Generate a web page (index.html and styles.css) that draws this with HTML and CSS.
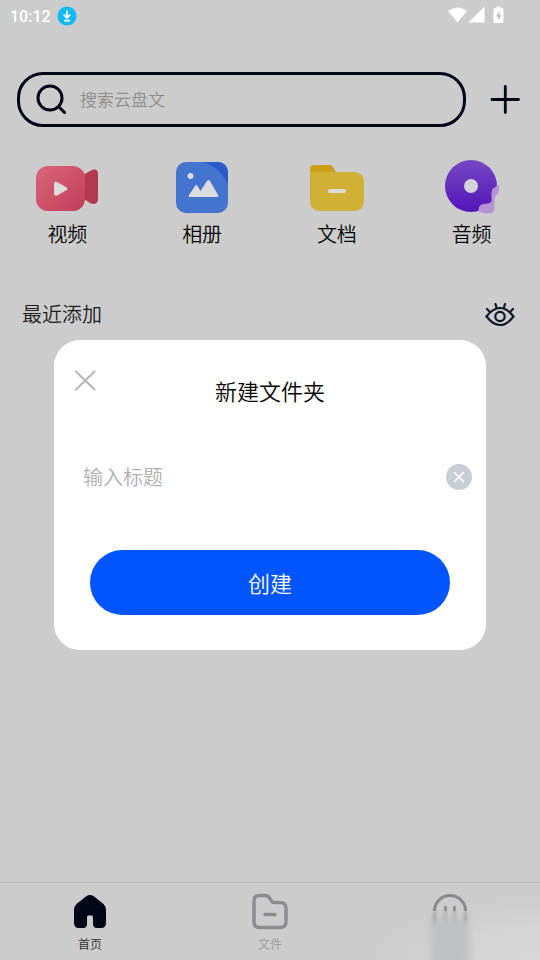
FILE: index.html
```html
<!DOCTYPE html>
<html lang="zh-CN">
<head>
<meta charset="utf-8">
<meta name="viewport" content="width=device-width, initial-scale=1">
<title>云盘</title>
<link rel="stylesheet" href="styles.css">
</head>
<body>
<div class="screen">
  <div class="status">
    <span class="time">10:12</span>
    <svg width="20" height="20" viewBox="0 0 20 20"><circle cx="10" cy="10" r="9.6" fill="#12b9f5"/><path d="M10 4.5v7M6.8 8.7 10 12l3.200-3.300M7 14.600h6" fill="none" stroke="#fff" stroke-width="1.700"/></svg>
    <svg class="signals" width="58" height="20" viewBox="0 0 58 20" fill="#fff"><path d="M0 5Q9.500-2 19 5L9.500 16.500Z"/><path d="M36.500 .5V16.500H20.500Z"/><path d="M48.500 2V.5h4V2H54q1.500 0 1.500 1.500v12q0 1.500-1.500 1.500h-7q-1.500 0-1.500-1.500v-12Q45.500 2 47 2Z"/><path d="M51.500 5 48 10.500h2.200v4l3-5.500H51Z" fill="#bbb"/></svg>
  </div>

  <header class="top">
    <label class="search">
      <svg width="32" height="32" viewBox="0 0 32 32" fill="none" stroke="#020617" stroke-width="3" stroke-linecap="round"><circle cx="14" cy="14" r="12"/><path d="m23 23 5.500 5.500"/></svg>
      <input type="search" placeholder="搜索云盘文" aria-label="搜索">
    </label>
    <button class="icon-button" type="button" aria-label="添加">
      <svg width="30" height="30" viewBox="0 0 30 30" stroke="#020617" stroke-width="2.800" stroke-linecap="round"><path d="M15.300 1.500v26M2 14.500h26.500"/></svg>
    </button>
  </header>

  <nav class="categories" aria-label="分类">
    <a href="#video">
      <svg width="64" height="56" viewBox="0 0 64 56"><defs><linearGradient id="pink" x1="0" y1="0" x2="1" y2="1"><stop offset="0" stop-color="#d9667a"/><stop offset="1" stop-color="#c23d59"/></linearGradient></defs><path d="M48 15 56 10.500q7-3 7 4v24q0 7-7 5l-8-5Z" fill="#b1384e"/><rect x="1" y="6" width="49" height="45" rx="12" fill="url(#pink)"/><path d="M19 24q0-3 3-2l9 5q3 2 0 3.500l-9 5q-3 1-3-2Z" fill="#dddada"/></svg>
      <span>视频</span>
    </a>
    <a href="#album">
      <svg width="64" height="56" viewBox="0 0 64 56"><defs><clipPath id="tile"><rect x="6" y="2" width="52" height="51" rx="10"/></clipPath></defs><g clip-path="url(#tile)"><path d="M6 2h52v52H6Z" fill="#4474ce"/><path d="M33 2Q50 7 58 25V2Z" fill="#295cc9"/></g><circle cx="20.500" cy="16" r="3" fill="#dadbde"/><path d="M20 37q-2 0-1-2l6-9q1-2 2.500 0l3 5L37 21q1.500-2 3 0l8 14q1 2-1 2Z" fill="#dadbde"/></svg>
      <span>相册</span>
    </a>
    <a href="#docs">
      <svg width="64" height="56" viewBox="0 0 64 56"><path d="M5 25V9q0-4 4-4h15q3 0 4 2l4 7v11Z" fill="#cd9f18"/><path d="M5 12h43q11 0 11 11v17q0 11-11 11H16Q5 51 5 40Z" fill="#d0b035"/><rect x="23" y="29" width="18" height="4" rx="1.500" fill="#dddbd2"/></svg>
      <span>文档</span>
    </a>
    <a href="#audio">
      <svg width="64" height="56" viewBox="0 0 64 56"><defs><linearGradient id="violet" x1="0" y1="0" x2="0" y2="1"><stop offset="0" stop-color="#7647c4"/><stop offset="1" stop-color="#5315b9"/></linearGradient></defs><circle cx="31" cy="26" r="26" fill="url(#violet)"/><circle cx="31" cy="26" r="7" fill="#d6d2dc"/><path d="M53 28q3 0 4-3 2.500 0 2 5 0 4-4.500 7v12q0 4.500-7 4.500-9 0-9-4 0-6 9-6 3 0 4-2V32Z" fill="#b793d1"/></svg>
      <span>音频</span>
    </a>
  </nav>

  <main class="recent">
    <h2>最近添加</h2>
    <button class="icon-button" type="button" aria-label="显示或隐藏">
      <svg width="32" height="30" viewBox="0 0 32 30" fill="none" stroke="#11182a" stroke-width="2.200" stroke-linecap="round"><path d="M2.500 16.500Q9 8 16 8t13.500 8.500Q23 25 16 25T2.500 16.500Z"/><circle cx="16" cy="16.500" r="4.700"/><path d="M5.500 11.500 3 9M12.500 7.500 11.500 4M20 7.500 21 4M26.500 11.500 29 9"/></svg>
    </button>
  </main>

  <nav class="tabs" aria-label="主导航">
    <a class="active" href="#home">
      <svg width="38" height="38" viewBox="0 0 38 38"><path d="M15.500 3q3.500-2 7 0l10 8q2.500 2.500 2.500 6v13q0 5-5 5h-4q-4 0-4-4v-6q0-2.500-1-2.500h-4q-1 0-1 2.500v6q0 4-4 4H8q-5 0-5-5V17q0-3.500 2.500-6Z" fill="#020617"/></svg>
      <span>首页</span>
    </a>
    <a href="#files">
      <svg width="38" height="38" viewBox="0 0 38 38" fill="none" stroke="#8b8c90" stroke-width="3.400" stroke-linecap="round"><path d="M8 2.500h6q3 0 4.500 2.500l2 3q1 1.500 3 1.500H29q6 0 6 6V29q0 5.500-6 5.500H8.500q-5.500 0-5.500-5.500V8q0-5.500 5-5.500Z"/><path d="M14 21.500h10"/></svg>
      <span>文件</span>
    </a>
    <a class="profile" href="#me" aria-label="我的">
      <svg width="180" height="77" viewBox="0 0 180 77"><defs><filter id="soft" x="-50%" y="-50%" width="200%" height="200%"><feGaussianBlur stdDeviation="5 5"/></filter><filter id="drip" x="-50%" y="-50%" width="200%" height="200%"><feGaussianBlur stdDeviation="1.500 3"/></filter><linearGradient id="fade" x1="0" y1="0" x2="0" y2="1"><stop offset="0" stop-color="#a9abae" stop-opacity=".4"/><stop offset="1" stop-color="#acaeb1" stop-opacity=".6"/></linearGradient><radialGradient id="haze" cx="1" cy="1" r="1"><stop offset="0" stop-color="#d8d8d8"/><stop offset=".5" stop-color="#d6d6d6" stop-opacity=".8"/><stop offset="1" stop-color="#d2d2d2" stop-opacity="0"/></radialGradient></defs><path d="M0 10h180v67H0Z" fill="url(#haze)"/><path d="M71 34h38v60H71Z" fill="url(#fade)" filter="url(#soft)"/><path d="M73 29h3v10h-3ZM84.500 27h2v9h-2ZM93.500 27h2v9h-2ZM104 29h3v10h-3Z" fill="#8e9093" opacity=".7" filter="url(#drip)"/><path d="M74.500 28a15.500 15.500 0 0 1 31 0" fill="none" stroke="#88898c" stroke-width="3"/><path d="M85.500 24v3M94.500 24v3" stroke="#88898c" stroke-width="2.600" stroke-linecap="round"/></svg>
    </a>
  </nav>

  <div class="overlay">
    <form class="dialog" role="dialog" aria-labelledby="dialog-title">
      <button class="close" type="button" aria-label="关闭">
        <svg width="22" height="22" viewBox="0 0 22 22" stroke="#b9b9b9" stroke-width="2.200" stroke-linecap="round"><path d="m2 1.500 18.500 18M20.500 1.500 2 19.500"/></svg>
      </button>
      <h1 id="dialog-title">新建文件夹</h1>
      <div class="field">
        <input type="text" placeholder="输入标题" aria-label="标题">
        <button class="icon-button" type="button" aria-label="清除">
          <svg width="26" height="26" viewBox="0 0 26 26"><circle cx="13" cy="13" r="13" fill="#c9ced5"/><path d="m8.500 8.500 9 9M17.500 8.500l-9 9" stroke="#fff" stroke-width="1.700" stroke-linecap="round"/></svg>
        </button>
      </div>
      <button class="create" type="submit">创建</button>
    </form>
  </div>
</div>
</body>
</html>
```
FILE: styles.css
```css
* {
  box-sizing: border-box;
}

body {
  margin: 0;
  background: #ccc;
  color: #050505;
  font-family: Roboto, "Noto Sans CJK SC", sans-serif;
  font-weight: 350;
}

svg {
  display: block;
  flex: none;
}

a {
  color: inherit;
  text-decoration: none;
}

button,
input {
  padding: 0;
  border: 0;
  background: none;
  font: inherit;
}

input {
  flex: 1;
  min-width: 0;
  outline: 0;
}

.screen {
  position: relative;
  display: flex;
  flex-direction: column;
  min-height: 100vh;
}

.status {
  display: flex;
  align-items: center;
  gap: 6px;
  height: 32px;
  padding: 0 34px 0 10px;
  color: #fff;
  font-size: 16px;
  font-weight: 500;
}

.signals {
  margin-left: auto;
}

.top {
  display: flex;
  align-items: center;
  gap: 24px;
  padding: 40px 20px 0 17px;
}

.search {
  display: flex;
  flex: 1;
  align-items: center;
  gap: 12px;
  height: 55px;
  padding: 0 16px;
  border: 3px solid #020617;
  border-radius: 26px;
  font-size: 17px;
}

.search input::placeholder {
  color: #8c8c8c;
  opacity: 1;
}

.categories {
  display: grid;
  grid-template-columns: repeat(4, 1fr);
  padding: 33px 1px 0 0;
}

.categories a {
  display: flex;
  flex-direction: column;
  align-items: center;
  gap: 4px;
  font-size: 20px;
  line-height: 30px;
}

.recent {
  display: flex;
  flex: 1;
  align-items: flex-start;
  justify-content: space-between;
  padding: 50px 24px 0 22px;
}

.recent h2 {
  margin: 0;
  color: #1c1c1c;
  font-size: 20px;
  font-weight: inherit;
  line-height: 30px;
}

.tabs {
  display: grid;
  grid-template-columns: repeat(3, 1fr);
  height: 78px;
  border-top: 1px solid #b8b9bb;
}

.tabs a {
  display: flex;
  flex-direction: column;
  align-items: center;
  gap: 4px;
  padding-top: 10px;
  color: #9b9b9b;
  font-size: 12px;
  line-height: 20px;
}

.tabs .active {
  color: #2b2b2b;
}

.tabs .profile {
  padding-top: 0;
  overflow: hidden;
}

.overlay {
  position: absolute;
  inset: 30px 0 0;
  display: flex;
  align-items: center;
  justify-content: center;
}

.dialog {
  position: relative;
  display: flex;
  flex-direction: column;
  width: 80%;
  padding: 35px 36px;
  border-radius: 26px;
  background: #fff;
}

.close {
  position: absolute;
  top: 30px;
  left: 20px;
}

.dialog h1 {
  margin: 0;
  font-size: 22px;
  font-weight: inherit;
  line-height: 36px;
  text-align: center;
}

.field {
  display: flex;
  align-items: center;
  height: 40px;
  margin: 46px -22px 53px -7px;
  font-size: 20px;
}

.field input {
  height: 40px;
  padding-top: 2px;
}

.field input::placeholder {
  color: #b0b0b0;
  opacity: 1;
}

.create {
  height: 65px;
  padding-bottom: 2px;
  border-radius: 33px;
  background: #05f;
  color: #fff;
  font-size: 22px;
}
```
